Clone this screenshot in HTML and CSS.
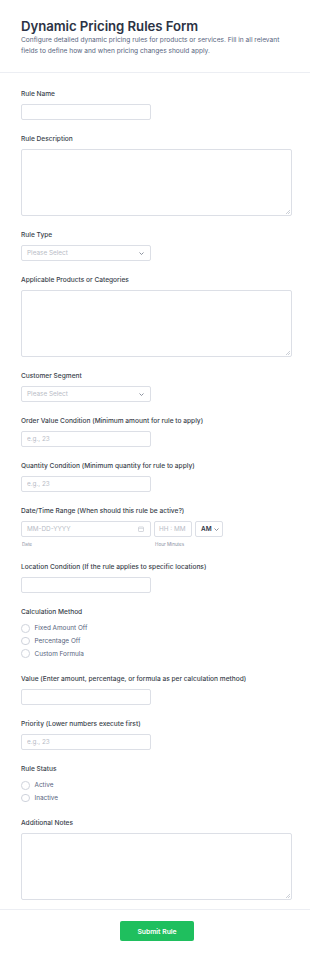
FILE: index.html
```html
<!DOCTYPE html>
<html lang="en">
<head>
<meta charset="UTF-8">
<title>Dynamic Pricing Rules Form</title>
<link rel="stylesheet" href="styles.css">
</head>
<body>
<div class="page">
	<div class="form-header">
		<h1 class="form-title">Dynamic Pricing Rules Form</h1>
		<p class="form-sub">Configure detailed dynamic pricing rules for products or services. Fill in all relevant fields to define how and when pricing changes should apply.</p>
	</div>

	<form class="form-body">
		<div class="field">
			<label class="lbl">Rule Name</label>
			<input type="text" class="inp">
		</div>
		<div class="field">
			<label class="lbl">Rule Description</label>
			<textarea class="area"></textarea>
		</div>
		<div class="field">
			<label class="lbl">Rule Type</label>
			<div class="sel">Please Select <svg class="chev" width="5" height="3" viewBox="0 0 5 3"><path d="M0.5 0.5 L2.5 2.5 L4.5 0.5" fill="none" stroke="#6f7787" stroke-width="0.8"/></svg></div>
		</div>
		<div class="field">
			<label class="lbl">Applicable Products or Categories</label>
			<textarea class="area"></textarea>
		</div>
		<div class="field">
			<label class="lbl">Customer Segment</label>
			<div class="sel">Please Select <svg class="chev" width="5" height="3" viewBox="0 0 5 3"><path d="M0.5 0.5 L2.5 2.5 L4.5 0.5" fill="none" stroke="#6f7787" stroke-width="0.8"/></svg></div>
		</div>
		<div class="field">
			<label class="lbl">Order Value Condition (Minimum amount for rule to apply)</label>
			<input type="text" class="inp" placeholder="e.g., 23">
		</div>
		<div class="field">
			<label class="lbl">Quantity Condition (Minimum quantity for rule to apply)</label>
			<input type="text" class="inp" placeholder="e.g., 23">
		</div>
		<div class="field">
			<label class="lbl">Date/Time Range (When should this rule be active?)</label>
			<div class="dt-row">
				<div class="dt-col">
					<div class="sel date">MM-DD-YYYY
						<svg class="cal" width="6" height="6" viewBox="0 0 6 6"><rect x="0.5" y="1" width="5" height="4.5" rx="0.6" fill="none" stroke="#c3c7d0" stroke-width="0.7"/><line x1="0.5" y1="2.4" x2="5.5" y2="2.4" stroke="#c3c7d0" stroke-width="0.6"/></svg>
					</div>
					<span class="sub">Date</span>
				</div>
				<div class="dt-col">
					<div class="sel time">HH : MM</div>
					<span class="sub">Hour Minutes</span>
				</div>
				<div class="dt-col">
					<div class="sel ampm">AM <svg class="chev" width="5" height="3" viewBox="0 0 5 3"><path d="M0.5 0.5 L2.5 2.5 L4.5 0.5" fill="none" stroke="#6f7787" stroke-width="0.8"/></svg></div>
				</div>
			</div>
		</div>
		<div class="field">
			<label class="lbl">Location Condition (If the rule applies to specific locations)</label>
			<input type="text" class="inp">
		</div>
		<div class="field">
			<label class="lbl">Calculation Method</label>
			<div class="radios">
				<label class="radio"><span class="dot"></span>Fixed Amount Off</label>
				<label class="radio"><span class="dot"></span>Percentage Off</label>
				<label class="radio"><span class="dot"></span>Custom Formula</label>
			</div>
		</div>
		<div class="field">
			<label class="lbl">Value (Enter amount, percentage, or formula as per calculation method)</label>
			<input type="text" class="inp">
		</div>
		<div class="field">
			<label class="lbl">Priority (Lower numbers execute first)</label>
			<input type="text" class="inp" placeholder="e.g., 23">
		</div>
		<div class="field">
			<label class="lbl">Rule Status</label>
			<div class="radios">
				<label class="radio"><span class="dot"></span>Active</label>
				<label class="radio"><span class="dot"></span>Inactive</label>
			</div>
		</div>
		<div class="field">
			<label class="lbl">Additional Notes</label>
			<textarea class="area"></textarea>
		</div>
	</form>

	<div class="form-foot">
		<button type="button" class="btn">Submit Rule</button>
	</div>
</div>
</body>
</html>
```

FILE: styles.css
```css
* {margin:0; padding:0; box-sizing:border-box;}
body {background:#fff; font-family:Inter, "Noto Sans", sans-serif; color:#2c3345;}

.form-header {padding:18px 18px 15px 21px; border-bottom:1px solid #eceef3;}
.form-title {font-size:13.2px; font-weight:600; line-height:17px; color:#2c3345; letter-spacing:-0.05px;}
.form-sub {margin-top:0; font-size:6.6px; line-height:11px; color:#57647e;}

.form-body {padding:17px 18px 9px 21px; display:flex; flex-direction:column; gap:15px;}
.field {display:flex; flex-direction:column;}
.lbl {font-size:6.6px; line-height:9px; font-weight:500; color:#3a3f4c; margin-bottom:5px;}

.inp, .sel, .area {border:1px solid #dcdfe6; border-radius:2px; background:#fff; font-family:inherit;}
.inp {width:130px; height:16px; font-size:6.4px; padding:0 5px; color:#2c3345; outline:none;}
.inp::placeholder {color:#b8bcc6;}
.area {width:271px; height:67px; resize:none; outline:none;
	background:linear-gradient(135deg, transparent 40%, #cdd1d8 40%, #cdd1d8 52%, transparent 52%, transparent 70%, #cdd1d8 70%, #cdd1d8 82%, transparent 82%) no-repeat right 1px bottom 1px / 4px 4px;}

.sel {width:130px; height:16px; display:flex; align-items:center; justify-content:space-between; padding:0 6px 0 5px; font-size:6.4px; color:#b8bcc6; white-space:nowrap;}
.chev {display:block; flex-shrink:0;}

.dt-row {display:flex; gap:3px;}
.dt-col {display:flex; flex-direction:column;}
.sel.time {width:38px; padding:0 4px;}
.sel.ampm {width:28px; color:#2c3345; font-weight:600; padding:0 4px 0 5px; gap:2px;}
.sub {font-size:4.6px; line-height:6px; color:#8a92a3; margin-top:5px; padding-left:1px;}

.radios {display:flex; flex-direction:column;}
.radio {display:flex; align-items:center; height:12.7px; font-size:6.4px; color:#57647e;}
.dot {width:8.5px; height:8.5px; border:1px solid #cfd3dc; border-radius:50%; margin-right:5px;}

.form-foot {border-top:1px solid #eceef3; padding:11px 0 17px; display:flex; justify-content:center;}
.btn {width:74px; height:20px; margin-left:4px; border:none; border-radius:2px; background:#1fbf5e; color:#fff; font-family:inherit; font-size:6.8px; font-weight:600;}
```
